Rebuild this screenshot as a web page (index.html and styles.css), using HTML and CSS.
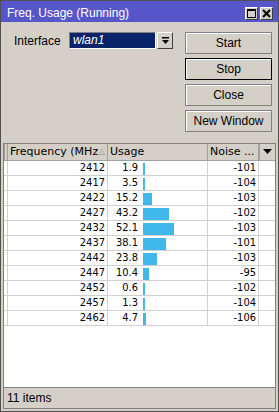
FILE: index.html
```html
<!DOCTYPE html>
<html>
<head>
    <title>Freq. Usage (Running)</title>
    <meta name="viewport" content="width=device-width, initial-scale=1.0">
    <link rel="stylesheet" href="styles.css">
</head>
<body>
<div class="window">
    <div class="titlebar">
        <span class="title">Freq. Usage (Running)</span>
        <span class="tbtn">
            <svg width="9" height="9" viewBox="0 0 9 9"><rect x="0.5" y="0.5" width="8" height="8" fill="none" stroke="#000"/><rect x="0" y="0" width="9" height="2" fill="#000"/></svg>
        </span>
        <span class="tbtn">
            <svg width="9" height="9" viewBox="0 0 9 9"><path d="M1 1 L8 8 M8 1 L1 8" stroke="#000" stroke-width="2"/></svg>
        </span>
    </div>

    <div class="top">
        <div class="form">
            <span class="label">Interface</span>
            <span class="input">wlan1</span>
            <span class="dropbtn">
                <svg width="9" height="9" viewBox="0 0 9 9"><rect x="1" y="1" width="7" height="1.5" fill="#000"/><path d="M1 4 L8 4 L4.5 8 Z" fill="#000"/></svg>
            </span>
        </div>
        <div class="actions">
            <button class="btn">Start</button>
            <button class="btn btn-default">Stop</button>
            <button class="btn">Close</button>
            <button class="btn">New Window</button>
        </div>
    </div>

    <div class="panel">
        <div class="grid">
            <div class="row head">
                <div class="cell"></div>
                <div class="cell hcell"><span class="htext">Frequency (MHz)</span><span class="sort">&#9651;</span></div>
                <div class="cell hcell"><span class="htext">Usage</span></div>
                <div class="cell hcell"><span class="htext">Noise ...</span></div>
                <div class="cell hcell drop">
                    <svg width="9" height="6" viewBox="0 0 9 6"><path d="M0 0 L9 0 L4.5 5 Z" fill="#000"/></svg>
                </div>
            </div>
            <div id="rows"></div>
        </div>
        <div class="status">11 items</div>
    </div>
</div>

<script type="text/javascript">
    var data = [
        [2412, "1.9", -101],
        [2417, "3.5", -104],
        [2422, "15.2", -103],
        [2427, "43.2", -102],
        [2432, "52.1", -103],
        [2437, "38.1", -101],
        [2442, "23.8", -103],
        [2447, "10.4", -95],
        [2452, "0.6", -102],
        [2457, "1.3", -104],
        [2462, "4.7", -106]
    ];

    var rows = document.getElementById("rows");
    var html = "";
    for (var i = 0; i < data.length; i++) {
        var w = Math.max(2, Math.round(parseFloat(data[i][1]) * 0.6));
        html += '<div class="row">' +
            '<div class="cell"></div>' +
            '<div class="cell num">' + data[i][0] + '</div>' +
            '<div class="cell usage"><span class="uval">' + data[i][1] + '</span>' +
            '<span class="bar" style="width:' + w + 'px"></span></div>' +
            '<div class="cell num">' + data[i][2] + '</div>' +
            '<div class="cell"></div>' +
            '</div>';
    }
    rows.innerHTML = html;
</script>
</body>
</html>
```

FILE: styles.css
```css
  * {
      box-sizing: border-box;
  }
  body {
      margin: 0;
      font-family: "Liberation Sans", Arial, sans-serif;
      font-size: 12px;
      color: #000;
  }
  .window {
      width: 279px;
      height: 412px;
      border: 1px solid #505050;
      background-color: #d4d0c8;
      padding-bottom: 2px;
      display: flex;
      flex-direction: column;
  }
  .titlebar {
      height: 21px;
      background-color: #5656c8;
      display: flex;
      align-items: flex-start;
      padding: 6px 5px 0 6px;
      gap: 2px;
  }
  .title {
      flex: 1;
      color: #fff;
      font-size: 12px;
      line-height: 14px;
      margin-top: -1px;
  }
  .tbtn {
      width: 13px;
      height: 13px;
      background-color: #d4d0c8;
      border: 1px solid;
      border-color: #fff #404040 #404040 #fff;
      display: flex;
      align-items: center;
      justify-content: center;
  }
  .top {
      height: 121px;
      display: flex;
      justify-content: space-between;
      padding: 10px 6px 0 13px;
  }
  .form {
      display: flex;
      align-items: flex-start;
  }
  .label {
      width: 55px;
      line-height: 17px;
      padding-top: 1px;
  }
  .input {
      width: 87px;
      height: 17px;
      background-color: #0a246a;
      color: #fff;
      font-style: italic;
      line-height: 15px;
      padding-left: 3px;
      border: 1px solid;
      border-color: #808080 #fff #fff #808080;
  }
  .dropbtn {
      width: 16px;
      height: 17px;
      margin-left: 1px;
      border: 1px solid;
      border-color: #fff #404040 #404040 #fff;
      display: flex;
      align-items: center;
      justify-content: center;
  }
  .actions {
      width: 87px;
      display: flex;
      flex-direction: column;
      gap: 4px;
  }
  .btn {
      height: 22px;
      padding: 0;
      background-color: #d4d0c8;
      font-family: "Liberation Sans", Arial, sans-serif;
      font-size: 12px;
      color: #000;
      border: 1px solid #808080;
      box-shadow: inset 1px 1px 0 #fff;
  }
  .btn-default {
      border-color: #000;
  }
  .panel {
      flex: 1;
      margin: 0 2px;
      border: 1px solid #808080;
      display: flex;
      flex-direction: column;
  }
  .grid {
      flex: 1;
      background-color: #fff;
      border-bottom: 1px solid #808080;
      font-family: "DejaVu Sans Condensed", "DejaVu Sans", sans-serif;
      font-stretch: condensed;
      font-size: 11px;
  }
  .row {
      display: grid;
      grid-template-columns: 4px 100px 100px 51px 1fr;
      height: 15px;
      border-bottom: 1px solid #d0d0d0;
  }
  .cell {
      border-right: 1px solid #d0d0d0;
      line-height: 14px;
      white-space: nowrap;
      overflow: hidden;
  }
  .row .cell:last-child {
      border-right: none;
  }
  .head {
      height: 17px;
      background-color: #d4d0c8;
      border-bottom: 1px solid #a0a0a0;
      font-family: "DejaVu Sans", sans-serif;
      font-stretch: normal;
  }
  .head .cell {
      border-right: 1px solid #a0a0a0;
      line-height: 16px;
  }
  .head .cell:first-child {
      border-left: 1px solid #a0a0a0;
  }
  .hcell {
      display: flex;
      padding-left: 2px;
  }
  .htext {
      flex: 1;
      overflow: hidden;
  }
  .sort {
      color: #909090;
      font-size: 8px;
      padding: 0 2px 0 1px;
  }
  .drop {
      justify-content: center;
      align-items: center;
      padding-left: 0;
      border-left: 1px solid #a0a0a0;
  }
  .num {
      text-align: right;
      padding-right: 2px;
  }
  .usage {
      display: flex;
      align-items: center;
  }
  .uval {
      width: 30px;
      text-align: right;
  }
  .bar {
      height: 12px;
      margin-left: 5px;
      margin-top: 1px;
      background-color: #40b8ec;
  }
  .status {
      height: 20px;
      line-height: 20px;
      padding-left: 3px;
  }
```
